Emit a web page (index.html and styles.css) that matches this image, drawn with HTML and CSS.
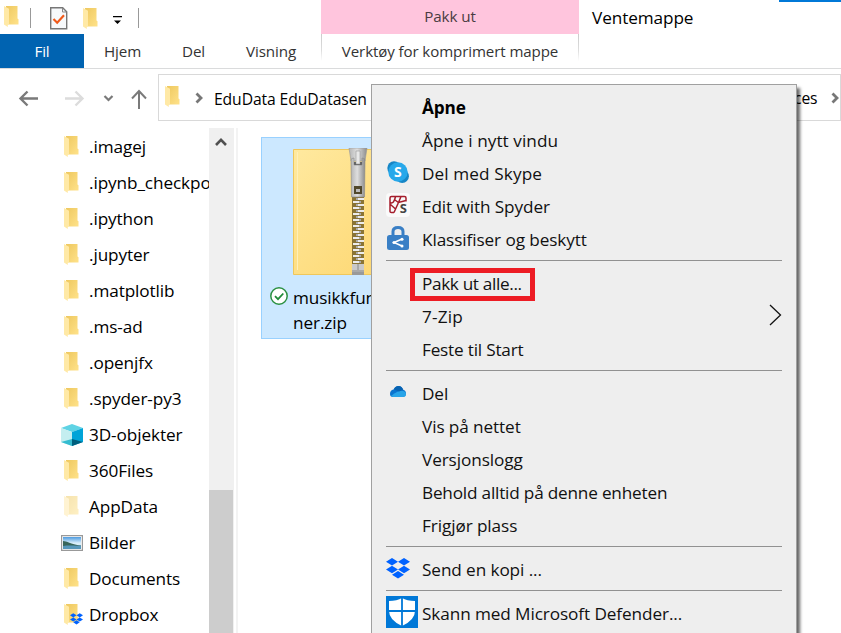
FILE: index.html
```html
<!DOCTYPE html>
<html lang="nb">
<head>
<meta charset="utf-8">
<title>Ventemappe</title>
<link rel="stylesheet" href="styles.css">
</head>
<body>
<svg class="defs" width="0" height="0" aria-hidden="true">
  <defs>
    <linearGradient id="fold" x1="0" y1="0" x2="1" y2="1"><stop offset="0" stop-color="#eec85f"/><stop offset="1" stop-color="#ffe28a"/></linearGradient>
    <linearGradient id="zipbody" x1="0" y1="0" x2="1" y2="1"><stop offset="0" stop-color="#ffe99f"/><stop offset="1" stop-color="#fdd56c"/></linearGradient>
    <linearGradient id="metal" x1="0" y1="0" x2="1" y2="0"><stop offset="0" stop-color="#b5b5b5"/><stop offset=".45" stop-color="#dedede"/><stop offset="1" stop-color="#8c8c8c"/></linearGradient>
    <linearGradient id="sky" x1="0" y1="0" x2="0" y2="1"><stop offset="0" stop-color="#4d9be0"/><stop offset=".5" stop-color="#d9eefa"/></linearGradient>
    <symbol id="folder" viewBox="0 0 15 22">
      <path d="M2 0h11.5v12.500l1 .8v5.200H2z" fill="url(#fold)"/>
      <path d="M0 0l5 2.700v15.500L3.800 18.600V21L0 18.500z" fill="#ffe9a6"/>
    </symbol>
    <symbol id="dropbox" viewBox="0 0 24 21">
      <path fill="#0062ff" d="M6 0l6 3.800-6 3.800-6-3.800zM18 0l6 3.800-6 3.800-6-3.800zM6 7.700l6 3.800-6 3.800-6-3.800zM18 7.700l6 3.800-6 3.800-6-3.800zM12 12.900l6 3.800-6 3.800-6-3.800z"/>
    </symbol>
    <pattern id="teeth" width="12" height="6" patternUnits="userSpaceOnUse" x="59" y="52">
      <rect width="12" height="6" fill="#8a7434"/>
      <path d="M1 1h6v2H1zM6 4h6v2H6z" fill="#ececec"/><path d="M7 1h2v2H7zM4 4h2v2H4z" fill="#aaa"/>
    </pattern>
  </defs>
</svg>
<div class="window">
  <header class="ribbon">
    <div class="left">
      <div class="quick">
        <svg class="qf1" width="15" height="22"><use href="#folder"/></svg>
        <i class="bar b1"></i>
        <svg class="qdoc" width="18" height="23" viewBox="0 0 18 23"><path d="M.7.7h12l4 4v17H.7z" fill="#f7f9fb" stroke="#777" stroke-width="1.400"/><path d="M12.500 1v4h4" fill="none" stroke="#888"/><path d="M3.500 12l3.700 3.700L14 8.300" fill="none" stroke="#f05a1a" stroke-width="2.200"/></svg>
        <svg class="qf2" width="15" height="22"><use href="#folder"/></svg>
        <svg class="qmore" width="9" height="9" viewBox="0 0 9 9"><path d="M0 0h9v1.200H0zM1 4.500h7L4.500 8z"/></svg>
        <i class="bar b2"></i>
      </div>
      <nav class="tabs">
        <span class="file">Fil</span><span class="tab t-hjem">Hjem</span><span class="tab t-del">Del</span><span class="tab t-vis">Visning</span>
      </nav>
    </div>
    <div class="tool"><div class="tool-head">Pakk ut</div><div class="tool-tab"><span>Verktøy for komprimert mappe</span></div></div>
    <div class="title">Ventemappe</div>
    <div class="accent"></div>
  </header>
  <div class="navrow">
    <svg class="arrows" width="158" height="58" viewBox="0 69 158 58" fill="none">
      <path d="M38 98.500H21M27.500 91.500l-7 7 7 7" stroke="#7a7a7a" stroke-width="2.400"/>
      <path d="M65 98.500H82M75.500 91.500l7 7-7 7" stroke="#dcdcdc" stroke-width="2.400"/>
      <path d="M104.500 96l4 4 4-4" stroke="#7a7a7a" stroke-width="2.200"/>
      <path d="M139 109V91.500M132 98.500l7-7.500 7 7.500" stroke="#7a7a7a" stroke-width="2"/>
    </svg>
    <div class="address">
      <svg width="15" height="22"><use href="#folder"/></svg>
      <svg class="chev" width="9" height="12" viewBox="0 0 9 12"><path d="M1.500 1.500L6 6l-4.500 4.500" fill="none" stroke="#777" stroke-width="2.800"/></svg>
      <span class="crumb">EduData EduDatasen</span>
      <span class="crumb end">ces</span>
      <svg class="chev2" width="9" height="12" viewBox="0 0 9 12"><path d="M1.500 1.500L6 6l-4.500 4.500" fill="none" stroke="#777" stroke-width="2.800"/></svg>
    </div>
  </div>
  <main class="body">
    <ul class="tree">
      <li><svg><use href="#folder"/></svg><span>.imagej</span></li>
      <li><svg><use href="#folder"/></svg><span>.ipynb_checkpo</span></li>
      <li><svg><use href="#folder"/></svg><span>.ipython</span></li>
      <li><svg><use href="#folder"/></svg><span>.jupyter</span></li>
      <li><svg><use href="#folder"/></svg><span>.matplotlib</span></li>
      <li><svg><use href="#folder"/></svg><span>.ms-ad</span></li>
      <li><svg><use href="#folder"/></svg><span>.openjfx</span></li>
      <li><svg><use href="#folder"/></svg><span>.spyder-py3</span></li>
      <li><svg class="wide" viewBox="0 0 22 22"><path d="M0 4l11-4 11 4-11 4z" fill="#5fd3e4"/><path d="M0 4l11 4v14L0 18z" fill="#c4eef0"/><path d="M22 4L11 8v14l11-4z" fill="#00a4d8"/><path d="M0 18l11-3v7z" fill="#35bcd0"/><path d="M11 15l11 3-11 4z" fill="#005f7d"/></svg><span>3D-objekter</span></li>
      <li><svg><use href="#folder"/></svg><span>360Files</span></li>
      <li class="dim"><svg><use href="#folder"/></svg><span>AppData</span></li>
      <li><svg class="wide" viewBox="0 0 22 22"><path d="M.6 3.600h20.800v14.800H.6z" fill="#fff" stroke="#999" stroke-width="1.200"/><path d="M2 5h18v12H2z" fill="url(#sky)"/><path d="M2 9c4 0 7 3 18 4.500v1H2z" fill="#39665a"/><path d="M2 14c7-1 12 0 18-.5V17H2z" fill="#5797ba"/></svg><span>Bilder</span></li>
      <li><svg><use href="#folder"/></svg><span>Documents</span></li>
      <li><svg class="db" viewBox="0 0 19 22"><use href="#folder" width="15" height="22"/><use href="#dropbox" x="6" y="9" width="13" height="12"/></svg><span>Dropbox</span></li>
    </ul>
    <div class="scroll"><svg width="12" height="10" viewBox="0 0 12 10"><path d="M1 8l5-5.200L11 8" fill="none" stroke="#505050" stroke-width="2.600"/></svg><div class="thumb"></div></div>
    <div class="split"></div>
    <section class="files">
      <div class="item">
        <svg class="zip" width="126" height="128" viewBox="0 0 126 128">
          <path d="M.5 1.500h125v125H.5z" fill="url(#zipbody)" stroke="#efc75c"/>
          <path d="M4.500 4v118" stroke="#ffefb8"/>
          <path d="M59 49h12v67H59z" fill="url(#teeth)"/>
          <path d="M56 0h18l-2 13H58z" fill="url(#metal)" stroke="#999" stroke-width=".6"/>
          <path d="M60 14h10v6H60z" fill="#555"/>
          <path d="M58 12q0-2 3-2v7h8v-7q3 0 3 2l-.5 37h-13z" fill="url(#metal)" stroke="#888" stroke-width=".6"/>
          <path d="M63 3h4v13h-4z" fill="#e8e8e8" stroke="#999" stroke-width=".6"/>
          <path d="M61 38h8v8h-8z" fill="#51482c"/><path d="M63 41h4v3h-4z" fill="#bbb"/>
          <path d="M59 116h12v11H59z" fill="#c9c9c9"/><path d="M65 116v6M59 123h12" stroke="#888"/><path d="M59 124h12v3H59z" fill="#999"/>
        </svg>
        <div class="label">
          <svg width="18" height="18" viewBox="0 0 18 18"><circle cx="9" cy="9" r="8.200" fill="#fff" stroke="#2c9143" stroke-width="1.500"/><path d="M5 9.200l3 3 5.300-5.700" fill="none" stroke="#1f8a39" stroke-width="1.800"/></svg>
          <span>musikkfunksjo<br>ner.zip</span>
        </div>
      </div>
    </section>
  </main>

  <div class="menu">
    <div class="row bold m1"><span>Åpne</span></div>
    <div class="row m2"><span>Åpne i nytt vindu</span></div>
    <div class="row m3"><svg width="22" height="22" viewBox="0 0 22 22"><circle cx="7" cy="7" r="6.700" fill="#1686c6"/><circle cx="15.200" cy="15.200" r="6.700" fill="#1686c6"/><circle cx="11" cy="11" r="9.700" fill="#27a8ea"/><text x="11" y="16" text-anchor="middle" class="skype">S</text></svg><span>Del med Skype</span></div>
    <div class="row m4"><svg width="24" height="24" viewBox="0 0 24 24"><rect width="24" height="24" rx="4" fill="#fafafa"/><path d="M4 5q0-1.500 1.500-1.500h13Q20 3.500 20 5v3.500M4 5v13.500q0 1 1.500 1H8M4 9.500q4 2 5.500-6M9 7l3.500 2.500L20 7.500M12.500 9.500L8 19.500M4.500 11.500L9.500 16M15 3.500l-2.500 6" fill="none" stroke="#a51e2d" stroke-width="1.500"/><text x="17.300" y="20" text-anchor="middle" class="spy">S</text></svg><span>Edit with Spyder</span></div>
    <div class="row m5"><svg width="22" height="24" viewBox="0 0 22 24"><path d="M6 10V5.500Q6 1.500 11 1.500T16 5.500V10" fill="none" stroke="#397fc5" stroke-width="3"/><rect y="9" width="22" height="15" rx="2.500" fill="#397fc5"/><path d="M15 13l-8 3.500 8 3.500" fill="none" stroke="#fff" stroke-width="1.500"/><circle cx="15" cy="13.300" r="1.500" fill="#fff"/><circle cx="7" cy="16.500" r="1.500" fill="#fff"/><circle cx="15" cy="20" r="1.500" fill="#fff"/></svg><span>Klassifiser og beskytt</span></div>
    <hr>
    <div class="row m6"><span class="marked">Pakk ut alle...</span></div>
    <div class="row m7"><span>7-Zip</span><svg class="sub" width="13" height="22" viewBox="0 0 13 22"><path d="M1 1l10.500 10L1 21" fill="none" stroke="#111" stroke-width="1.300"/></svg></div>
    <div class="row m8"><span>Feste til Start</span></div>
    <hr>
    <div class="row m9"><svg width="16" height="11" viewBox="0 0 16 11"><path d="M0 8Q0 4 3.500 3.500 5 0 8.500 0q3.500 0 4.500 3.500Q16 4.500 16 7.500T13 11H3Q0 11 0 8z" fill="#0a74cf"/><path d="M1 10q3-3 7-4.500l3-1q5 .5 5 3.500t-3 3H3z" fill="#28a4e8"/><path d="M4 3.500Q5 0 8.500 0q3.500 0 4.500 4l-4 1.500z" fill="#0863b2"/></svg><span>Del</span></div>
    <div class="row m10"><span>Vis på nettet</span></div>
    <div class="row m11"><span>Versjonslogg</span></div>
    <div class="row m12"><span>Behold alltid på denne enheten</span></div>
    <div class="row m13"><span>Frigjør plass</span></div>
    <hr>
    <div class="row m14"><svg width="24" height="21"><use href="#dropbox"/></svg><span>Send en kopi ...</span></div>
    <hr>
    <div class="row m15"><svg width="32" height="32" viewBox="0 0 32 32"><path d="M0 0h32v32H0z" fill="#0078d7"/><path d="M16 2q5 3 13 3v10q0 9-13 15Q3 24 3 15V5q8 0 13-3z" fill="#fff"/><path d="M16 2v28M3 15h26" stroke="#0078d7" stroke-width="1.800"/></svg><span>Skann med Microsoft Defender...</span></div>
  </div>
</div>
</body>
</html>
```
FILE: styles.css
```css
* { box-sizing: border-box; }
body { margin: 0; font: 17.2px/24px "Open Sans", "Noto Sans", sans-serif; letter-spacing: -.1px; color: #000; background: #fff; }
.defs { position: absolute; }
svg { display: block; flex: none; }
span { white-space: nowrap; }
.window { position: relative; width: 841px; height: 633px; overflow: hidden; background: #fff; }
.ribbon { display: flex; height: 69px; border-bottom: 1px solid #dadbdc; }
.left { width: 321px; }
.quick { display: flex; height: 34px; align-items: flex-start; }
.qf1 { margin: 6px 0 0 4px; }
.bar { width: 1px; height: 20px; margin-top: 8px; background: #999; }
.b1 { margin-left: 11px; }
.qdoc { margin: 7px 0 0 19px; }
.qf2 { margin: 8px 0 0 15px; }
.qmore { margin: 16px 0 0 15px; }
.b2 { margin-left: 16px; }
.tabs { display: flex; height: 34px; line-height: 34px; font-size: 15.2px; color: #333; }
.file { width: 84px; text-align: center; background: #0063b1; color: #fff; }
.t-hjem { margin-left: 20px; width: 78px; }
.t-del { width: 64px; }
.tool { width: 258px; }
.tool-head { height: 34px; line-height: 33px; text-align: center; font-size: 15.2px; color: #4a3c42; background: #ffc5dd; }
.tool-tab { height: 34px; line-height: 34px; text-align: center; font-size: 15.1px; color: #333; background: linear-gradient(#ccc, #ddd 60%, #fff) left/1px 27px no-repeat, linear-gradient(#ccc, #ddd 60%, #fff) right/1px 27px no-repeat; background-position: left top, right top; }
.title { width: 200px; padding: 6px 0 0 13px; }
.accent { width: 62px; height: 2px; background: #0078d7; }
.navrow { display: flex; height: 59px; }
.address { display: flex; align-items: center; width: 700px; height: 47px; margin-top: 5px; border: 1px solid #d9d9d9; font-size: 15.7px; padding: 0 0 0 6px; }
.address > svg:first-child { margin-top: -1px; }
.chev { margin: 1px 0 0 15px; }
.crumb { margin: 2px 0 0 10px; width: 153px; }
.crumb.end { width: 25px; margin: 0 0 0 427px; }
.chev2 { margin: 1px 0 0 12px; }
.body { display: flex; height: 505px; }
.tree { list-style: none; margin: 0; padding: 1px 0 0 61px; width: 209px; overflow: hidden; }
.tree li { display: flex; align-items: center; height: 36px; }
.tree svg { width: 15px; height: 22px; margin: 0 10px 0 3px; }
.tree svg.wide { width: 22px; margin: 0 6px 0 0; }
.tree svg.db { width: 19px; margin-right: 6px; }
.dim svg { opacity: .5; }
.scroll { width: 25px; background: #f0f0f0; padding-top: 9px; display: flex; flex-direction: column; }
.scroll svg { margin-left: 6px; }
.thumb { width: 24px; height: 143px; margin-top: auto; background: #cdcdcd; }
.split { width: 4px; border-right: 2px solid #f3f3f3; }
.files { padding: 9px 0 0 23px; }
.item { width: 190px; height: 202px; padding: 10px 0 0 31px; border: 1px solid #99d1ff; background: #cce8ff; }
.label { display: flex; margin: 9px 0 0 -23px; line-height: 25px; }
.label svg { margin: 2px 5px 0 0; }
.menu { position: absolute; left: 371px; top: 84px; width: 426px; height: 560px; padding: 6px 14px; background: #eee; border: 1px solid #a0a0a0; box-shadow: 3px 4px 3px rgba(0,0,0,.6); color: #111; }
.row { display: grid; grid-template-columns: 36px auto 1fr; align-items: center; height: 33px; }
.row span { grid-column: 2; grid-row: 1; }
.row svg { grid-column: 1; grid-row: 1; }
.row .sub { grid-column: 3; justify-self: end; margin: -4px 0 0; }
.bold { font-weight: 700; color: #000; }
.menu hr { height: 1px; margin: 4px 0 6px; border: 0; background: #919191; }
.row .marked { width: 125px; height: 33px; margin-left: -12px; padding-left: 7px; line-height: 22px; border: 5px solid #ed1c24; letter-spacing: -.35px; }
.m6 { padding-top: 1px; }
.m2 { letter-spacing: .05px; }
.m3 { letter-spacing: .1px; }
.m7 { letter-spacing: .2px; }
.m8, .m12 { letter-spacing: -.2px; }
.m3 svg, .m5 svg { margin: -3px 0 0 1px; }
.m4 svg, .m14 svg { margin-top: -3px; }
.m9 svg { margin: -4px 0 0 4px; }
.m15 svg { margin-top: -3px; }
.skype { font: 700 14px "Open Sans", sans-serif; fill: #fff; }
.spy { font: 700 13px "Open Sans", sans-serif; fill: #444; }
```
